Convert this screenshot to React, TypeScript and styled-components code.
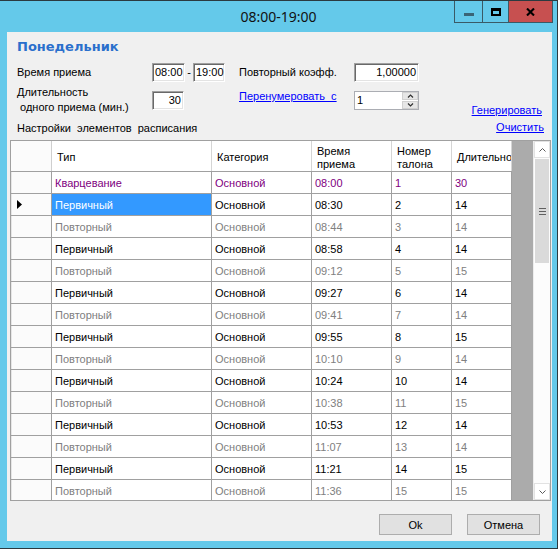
import React from "react";
import styled, { createGlobalStyle } from "styled-components";

const GlobalStyle = createGlobalStyle`
  html, body { margin: 0; padding: 0; background: #ffffff; }
  body { font-family: "Liberation Sans", Arial, sans-serif; font-size: 11px; color: #000; }
  * { box-sizing: border-box; }
`;

const Window = styled.div`
  width: 558px;
  height: 549px;
  background: #64c9ea;
  border-top: 1px solid #2b3a40;
  border-right: 1px solid #2b3a40;
  border-bottom: 1px solid #2b3a40;
  display: flex;
  flex-direction: column;
`;

const TitleBar = styled.div`
  height: 31px;
  flex: none;
  display: grid;
  grid-template-columns: 1fr auto 1fr;
  align-items: center;
`;

const TitleText = styled.div`
  grid-column: 2;
  font-family: "Noto Sans", "Open Sans", sans-serif;
  font-size: 14px;
  line-height: 1;
  color: #111;
`;

const Controls = styled.div`
  grid-column: 3;
  justify-self: end;
  align-self: start;
  margin-right: 4px;
  display: flex;
  height: 22px;
  border: 1px solid #3a5a66;
  border-top: none;
`;

const CtrlButton = styled.div<{ $w: number; $close?: boolean }>`
  width: ${(p) => p.$w}px;
  height: 100%;
  display: flex;
  align-items: center;
  justify-content: center;
  background: ${(p) => (p.$close ? "#c75050" : "transparent")};
  & + & { border-left: 1px solid #3a5a66; }
`;

const Client = styled.div`
  flex: 1;
  margin: 0 5px 7px 7px;
  background: #f0f0f0;
  display: flex;
  flex-direction: column;
`;

const FormSection = styled.div`
  height: 108px;
  flex: none;
  padding: 0 8px 0 10px;
  display: flex;
  flex-direction: column;
`;

const DayTitle = styled.div`
  margin-top: 6px;
  font-family: "DejaVu Sans", "Liberation Sans", sans-serif;
  font-weight: bold;
  font-size: 13px;
  line-height: 18px;
  color: #2a6fcc;
`;

const FormRow = styled.div<{ $h: number; $top: number }>`
  display: grid;
  grid-template-columns: 135px 87px 115px 65px 1fr;
  height: ${(p) => p.$h}px;
  margin-top: ${(p) => p.$top}px;
  align-items: start;
`;

const Label = styled.div<{ $top?: number }>`
  line-height: 15px;
  margin-top: ${(p) => p.$top ?? 0}px;
  white-space: pre;
`;

const CenterLabel = styled.div`
  align-self: center;
  line-height: 15px;
  white-space: pre;
`;

const TimeRange = styled.div`
  display: flex;
  align-items: center;
  height: 19px;
`;

const Dash = styled.span`
  width: 8px;
  text-align: center;
  line-height: 15px;
`;

const SunkenInput = styled.div<{ $w: number; $right?: boolean; $top?: number }>`
  width: ${(p) => p.$w}px;
  height: 19px;
  margin-top: ${(p) => p.$top ?? 0}px;
  background: #fff;
  border: 1px solid;
  border-color: #a0a0a0 #ffffff #ffffff #a0a0a0;
  box-shadow: inset 1px 1px 0 #696969, inset -1px -1px 0 #e3e3e3;
  display: flex;
  align-items: center;
  justify-content: ${(p) => (p.$right ? "flex-end" : "flex-start")};
  padding: 0 2px 0 2px;
  line-height: 15px;
`;

const LinkText = styled.a<{ $top?: number; $right?: number }>`
  color: #0000ff;
  text-decoration: underline;
  line-height: 15px;
  white-space: pre;
  margin-top: ${(p) => p.$top ?? 0}px;
  margin-right: ${(p) => p.$right ?? 0}px;
  justify-self: end;
  cursor: pointer;
`;

const LeftLink = styled(LinkText)`
  justify-self: start;
`;

const SpinBox = styled.div`
  width: 65px;
  height: 19px;
  margin-top: 6px;
  background: #fff;
  border: 1px solid #abadb3;
  display: flex;
`;

const SpinValue = styled.div`
  flex: 1;
  padding-left: 2px;
  line-height: 17px;
`;

const SpinButtons = styled.div`
  width: 16px;
  display: flex;
  flex-direction: column;
  gap: 1px;
`;

const SpinBtn = styled.div`
  flex: 1;
  background: #e6e6e6;
  border: 1px solid #d0d0d0;
  display: flex;
  align-items: center;
  justify-content: center;
`;

const SettingsRow = styled.div`
  margin-top: 5px;
  height: 15px;
  display: flex;
  justify-content: space-between;
  align-items: flex-start;
`;

const GridFrame = styled.div`
  height: 361px;
  flex: none;
  margin: 0 1px 0 3px;
  border: 1px solid #a0a0a0;
  display: flex;
  overflow: hidden;
`;

const TableArea = styled.div`
  flex: 1;
  background: #ababab;
  overflow: hidden;
`;

const HeaderRow = styled.div`
  display: flex;
  width: 501px;
  height: 31px;
  background: #fff;
  border-bottom: 1px solid #a0a0a0;
`;

const HeaderCell = styled.div<{ $w: number }>`
  width: ${(p) => p.$w}px;
  flex: none;
  height: 100%;
  border-right: 1px solid #d5d5d5;
  padding: 3px 0 0 5px;
  display: flex;
  align-items: center;
  line-height: 12.6px;
  white-space: nowrap;
  overflow: hidden;
`;

const CornerCell = styled(HeaderCell)`
  background: #fbfbfb;
  border-right: 1px solid #cfcfcf;
`;

const DataRow = styled.div`
  display: flex;
  width: 501px;
  height: 22px;
  border-bottom: 1px solid #a0a0a0;
  background: #fff;
`;

type Kind = "q" | "p" | "r";
const kindColor: Record<Kind, string> = { q: "#800080", p: "#000000", r: "#808080" };

const Cell = styled.div<{ $w: number; $color: string; $selected?: boolean }>`
  width: ${(p) => p.$w}px;
  flex: none;
  height: 100%;
  border-right: 1px solid #a0a0a0;
  padding-left: 3px;
  display: flex;
  align-items: center;
  white-space: nowrap;
  overflow: hidden;
  color: ${(p) => (p.$selected ? "#ffffff" : p.$color)};
  background: ${(p) => (p.$selected ? "#3399ff" : "#ffffff")};
`;

const RowHeader = styled.div`
  width: 41px;
  flex: none;
  height: 100%;
  background: #fbfbfb;
  border-right: 1px solid #a0a0a0;
  box-shadow: inset 1px 0 0 #e6e6e6;
  display: flex;
  align-items: center;
  padding-left: 6px;
`;

const ScrollBar = styled.div`
  width: 17px;
  flex: none;
  background: #fcfcfc;
  display: flex;
  flex-direction: column;
  border-left: 1px solid #ededed;
`;

const ArrowBtn = styled.div`
  height: 17px;
  flex: none;
  background: #fff;
  border: 1px solid #e2e2e2;
  display: flex;
  align-items: center;
  justify-content: center;
`;

const Thumb = styled.div`
  height: 104px;
  flex: none;
  margin: 1px 1px 0 1px;
  background: #dadada;
  display: flex;
  flex-direction: column;
  align-items: center;
  justify-content: center;
  gap: 2px;
`;

const GripLine = styled.div`
  width: 7px;
  height: 1px;
  background: #606060;
`;

const Track = styled.div`
  flex: 1;
`;

const ButtonRow = styled.div`
  margin-top: 13px;
  display: flex;
  justify-content: flex-end;
  gap: 15px;
  padding-right: 12px;
`;

const DialogButton = styled.button`
  width: 73px;
  height: 21px;
  background: #e1e1e1;
  border: 1px solid #adadad;
  font-family: "Liberation Sans", Arial, sans-serif;
  font-size: 11px;
  color: #000;
  padding: 0;
`;

const Chevron = ({ up }: { up: boolean }) => (
  <svg width="7" height="4" viewBox="0 0 7 4">
    <polyline
      points={up ? "0.5,3.5 3.5,0.5 6.5,3.5" : "0.5,0.5 3.5,3.5 6.5,0.5"}
      fill="none"
      stroke="#5a5a5a"
      strokeWidth="1"
    />
  </svg>
);

const SmallChevron = ({ up }: { up: boolean }) => (
  <svg width="7" height="4" viewBox="0 0 7 4">
    <polyline
      points={up ? "1,3.5 3.5,1 6,3.5" : "1,0.5 3.5,3 6,0.5"}
      fill="none"
      stroke="#303030"
      strokeWidth="1.2"
    />
  </svg>
);

type Row = { kind: Kind; type: string; time: string; num: string; dur: string };

const rows: Row[] = [
  { kind: "q", type: "Кварцевание", time: "08:00", num: "1", dur: "30" },
  { kind: "p", type: "Первичный", time: "08:30", num: "2", dur: "14" },
  { kind: "r", type: "Повторный", time: "08:44", num: "3", dur: "14" },
  { kind: "p", type: "Первичный", time: "08:58", num: "4", dur: "14" },
  { kind: "r", type: "Повторный", time: "09:12", num: "5", dur: "15" },
  { kind: "p", type: "Первичный", time: "09:27", num: "6", dur: "14" },
  { kind: "r", type: "Повторный", time: "09:41", num: "7", dur: "14" },
  { kind: "p", type: "Первичный", time: "09:55", num: "8", dur: "15" },
  { kind: "r", type: "Повторный", time: "10:10", num: "9", dur: "14" },
  { kind: "p", type: "Первичный", time: "10:24", num: "10", dur: "14" },
  { kind: "r", type: "Повторный", time: "10:38", num: "11", dur: "15" },
  { kind: "p", type: "Первичный", time: "10:53", num: "12", dur: "14" },
  { kind: "r", type: "Повторный", time: "11:07", num: "13", dur: "14" },
  { kind: "p", type: "Первичный", time: "11:21", num: "14", dur: "15" },
  { kind: "r", type: "Повторный", time: "11:36", num: "15", dur: "15" },
];

const COLS = [160, 100, 80, 60, 60];

export default function App() {
  return (
    <>
      <GlobalStyle />
      <Window>
        <TitleBar>
          <TitleText>08:00-19:00</TitleText>
          <Controls>
            <CtrlButton $w={27}>
              <svg width="10" height="3" viewBox="0 0 10 3" style={{ marginTop: 6 }}>
                <rect x="0" y="0" width="10" height="3" fill="#3a6476" />
              </svg>
            </CtrlButton>
            <CtrlButton $w={26}>
              <svg width="10" height="8" viewBox="0 0 10 8" style={{ marginTop: 1 }}>
                <rect x="1" y="1.25" width="8" height="5.75" fill="none" stroke="#000" strokeWidth="2" />
                <rect x="0" y="0" width="10" height="3" fill="#000" />
              </svg>
            </CtrlButton>
            <CtrlButton $w={44} $close>
              <svg width="9" height="8" viewBox="0 0 9 8" style={{ marginTop: 1 }}>
                <path d="M1 0.5 L8 7.5 M8 0.5 L1 7.5" stroke="#000" strokeWidth="2.1" />
              </svg>
            </CtrlButton>
          </Controls>
        </TitleBar>
        <Client>
          <FormSection>
            <DayTitle>Понедельник</DayTitle>
            <FormRow $h={19} $top={7}>
              <CenterLabel>Время приема</CenterLabel>
              <TimeRange>
                <SunkenInput $w={33}>08:00</SunkenInput>
                <Dash>-</Dash>
                <SunkenInput $w={32}>19:00</SunkenInput>
              </TimeRange>
              <CenterLabel>Повторный коэфф.</CenterLabel>
              <SunkenInput $w={65} $right>1,00000</SunkenInput>
            </FormRow>
            <FormRow $h={30} $top={3}>
              <Label>{"Длительность\n одного приема (мин.)"}</Label>
              <SunkenInput $w={32} $right $top={6}>30</SunkenInput>
              <LeftLink $top={4}>{"Перенумеровать  с"}</LeftLink>
              <SpinBox>
                <SpinValue>1</SpinValue>
                <SpinButtons>
                  <SpinBtn><SmallChevron up /></SpinBtn>
                  <SpinBtn><SmallChevron up={false} /></SpinBtn>
                </SpinButtons>
              </SpinBox>
              <LinkText $top={18} $right={2}>Генерировать</LinkText>
            </FormRow>
            <SettingsRow>
              <Label $top={1}>{"Настройки  элементов  расписания"}</Label>
              <LinkText>Очистить</LinkText>
            </SettingsRow>
          </FormSection>
          <GridFrame>
            <TableArea>
              <HeaderRow>
                <CornerCell $w={41} />
                <HeaderCell $w={COLS[0]}>Тип</HeaderCell>
                <HeaderCell $w={COLS[1]}>Категория</HeaderCell>
                <HeaderCell $w={COLS[2]}>
                  Время
                  <br />
                  приема
                </HeaderCell>
                <HeaderCell $w={COLS[3]}>
                  Номер
                  <br />
                  талона
                </HeaderCell>
                <HeaderCell $w={COLS[4]}>Длительность</HeaderCell>
              </HeaderRow>
              {rows.map((r, i) => {
                const c = kindColor[r.kind];
                return (
                  <DataRow key={i}>
                    <RowHeader>
                      {i === 1 && (
                        <svg width="5" height="9" viewBox="0 0 5 9">
                          <polygon points="0,0 5,4.5 0,9" fill="#000" />
                        </svg>
                      )}
                    </RowHeader>
                    <Cell $w={COLS[0]} $color={c} $selected={i === 1}>{r.type}</Cell>
                    <Cell $w={COLS[1]} $color={c}>Основной</Cell>
                    <Cell $w={COLS[2]} $color={c}>{r.time}</Cell>
                    <Cell $w={COLS[3]} $color={c}>{r.num}</Cell>
                    <Cell $w={COLS[4]} $color={c}>{r.dur}</Cell>
                  </DataRow>
                );
              })}
            </TableArea>
            <ScrollBar>
              <ArrowBtn><Chevron up /></ArrowBtn>
              <Thumb>
                <GripLine />
                <GripLine />
                <GripLine />
              </Thumb>
              <Track />
              <ArrowBtn><Chevron up={false} /></ArrowBtn>
            </ScrollBar>
          </GridFrame>
          <ButtonRow>
            <DialogButton>Ok</DialogButton>
            <DialogButton>Отмена</DialogButton>
          </ButtonRow>
        </Client>
      </Window>
    </>
  );
}
